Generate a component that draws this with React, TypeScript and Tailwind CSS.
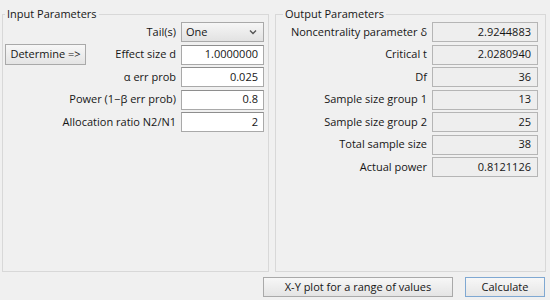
import React from "react";

const font = { fontFamily: '"Open Sans", "Liberation Sans", sans-serif' };

function InRow({ label, value }: { label: string; value: string }) {
  return (
    <div className="flex h-[20px] items-center justify-end gap-[5px]">
      <span className="whitespace-nowrap">{label}</span>
      <div className="flex h-[20px] w-[83px] items-center justify-end border border-[#a9a9a9] border-t-[#8e8e8e] bg-white pr-[5px]">
        {value}
      </div>
    </div>
  );
}

function OutRow({ label, value }: { label: string; value: string }) {
  return (
    <div className="flex h-[20px] items-center justify-end gap-[5px]">
      <span className="whitespace-nowrap">{label}</span>
      <div className="flex h-[20px] w-[106px] items-center justify-end border border-[#b5b5b5] bg-[#eeeeee] pr-[6px]">
        {value}
      </div>
    </div>
  );
}

export default function App() {
  return (
    <div
      className="flex h-[300px] w-[550px] flex-col bg-[#f0f0f0] text-[11px] font-medium text-[#161616]"
      style={font}
    >
      <div className="flex h-[272px] gap-[6px] pl-[2px] pt-[6px]">
        <fieldset className="m-0 h-[266px] w-[267px] border border-[#d8d8d8] p-0">
          <legend className="ml-[2px] px-[2px] leading-[16px]">Input Parameters</legend>
          <div className="flex flex-col gap-[2.5px] pl-[2px] pr-[4px]">
            <div className="flex h-[20px] items-center justify-end gap-[5px]">
              <span>Tail(s)</span>
              <div className="flex h-[20px] w-[83px] items-center justify-between border border-[#a9a9a9] bg-gradient-to-b from-[#f6f6f6] to-[#e2e2e2] pl-[4px] pr-[6px]">
                <span>One</span>
                <svg width="8" height="6" viewBox="0 0 8 6">
                  <path d="M1 1.5 L4 4.5 L7 1.5" fill="none" stroke="#555" strokeWidth="1.4" />
                </svg>
              </div>
            </div>
            <div className="flex h-[20px] items-center gap-[5px]">
              <div className="flex h-[21px] w-[81px] items-center justify-center border border-[#a9a9a9] bg-gradient-to-b from-[#f7f7f7] to-[#e4e4e4]">
                Determine =&gt;
              </div>
              <span className="ml-auto">Effect size d</span>
              <div className="flex h-[20px] w-[83px] items-center justify-end border border-[#a9a9a9] border-t-[#8e8e8e] bg-white pr-[5px]">
                1.0000000
              </div>
            </div>
            <InRow label="α err prob" value="0.025" />
            <InRow label="Power (1−β err prob)" value="0.8" />
            <InRow label="Allocation ratio N2/N1" value="2" />
          </div>
        </fieldset>
        <fieldset className="m-0 h-[266px] w-[271px] border border-[#d8d8d8] p-0">
          <legend className="ml-[7px] px-[2px] leading-[16px]">Output Parameters</legend>
          <div className="flex flex-col gap-[2.5px] pr-[7px]">
            <OutRow label="Noncentrality parameter δ" value="2.9244883" />
            <OutRow label="Critical t" value="2.0280940" />
            <OutRow label="Df" value="36" />
            <OutRow label="Sample size group 1" value="13" />
            <OutRow label="Sample size group 2" value="25" />
            <OutRow label="Total sample size" value="38" />
            <OutRow label="Actual power" value="0.8121126" />
          </div>
        </fieldset>
      </div>
      <div className="flex justify-end gap-[12px] pr-[5px] pt-[5px]">
        <div className="flex h-[20px] w-[190px] items-center justify-center border border-[#a9a9a9] bg-gradient-to-b from-[#f7f7f7] to-[#e4e4e4]">
          X-Y plot for a range of values
        </div>
        <div className="flex h-[20px] w-[80px] items-center justify-center border border-[#7fa8d2] bg-gradient-to-b from-[#f7f7f7] to-[#e6e6e6]">
          Calculate
        </div>
      </div>
    </div>
  );
}
